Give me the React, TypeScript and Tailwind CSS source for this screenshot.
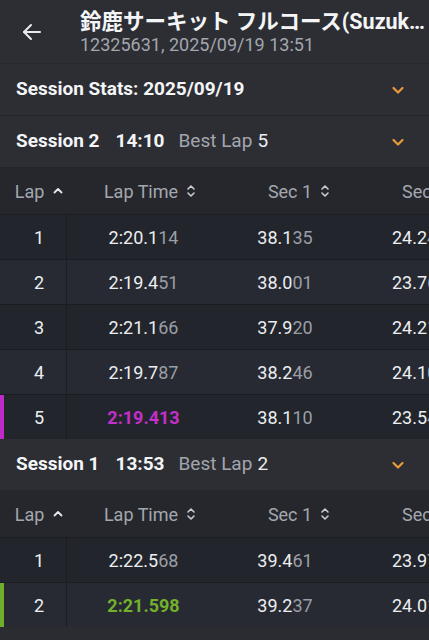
import React from 'react';

interface Lap {
  lap: number;
  time: string;
  sec1: string;
  sec2: string;
  best?: boolean;
}

interface Session {
  name: string;
  start: string;
  bestLap: number;
  color: 'magenta' | 'green';
  laps: Lap[];
}

const sessions: Session[] = [
  {
    name: 'Session 2',
    start: '14:10',
    bestLap: 5,
    color: 'magenta',
    laps: [
      { lap: 1, time: '2:20.114', sec1: '38.135', sec2: '24.248' },
      { lap: 2, time: '2:19.451', sec1: '38.001', sec2: '23.769' },
      { lap: 3, time: '2:21.166', sec1: '37.920', sec2: '24.213' },
      { lap: 4, time: '2:19.787', sec1: '38.246', sec2: '24.102' },
      { lap: 5, time: '2:19.413', sec1: '38.110', sec2: '23.541', best: true },
    ],
  },
  {
    name: 'Session 1',
    start: '13:53',
    bestLap: 2,
    color: 'green',
    laps: [
      { lap: 1, time: '2:22.568', sec1: '39.461', sec2: '23.977' },
      { lap: 2, time: '2:21.598', sec1: '39.237', sec2: '24.015', best: true },
    ],
  },
];

// ── Icons ───────────────────────────────────────────────────────────────────────

function BackArrow() {
  return (
    <svg width="24" height="24" viewBox="0 0 24 24" fill="none" stroke="#e8e9ec" strokeWidth="2" strokeLinecap="round" strokeLinejoin="round">
      <path d="M20 12H4" />
      <path d="M11 5l-7 7 7 7" />
    </svg>
  );
}

function Chevron() {
  return (
    <svg width="16" height="16" viewBox="0 0 16 16" fill="none" stroke="#e99b3c" strokeWidth="2.2" strokeLinecap="round" strokeLinejoin="round">
      <path d="M3.5 6l4.5 4.5L12.5 6" />
    </svg>
  );
}

function SortUp() {
  return (
    <svg width="12" height="12" viewBox="0 0 12 12" fill="none" stroke="#e6e7ea" strokeWidth="1.8" strokeLinecap="round" strokeLinejoin="round">
      <path d="M2.5 7.5L6 4l3.5 3.5" />
    </svg>
  );
}

function SortBoth() {
  return (
    <svg width="10" height="16" viewBox="0 0 10 16" fill="none" stroke="#c9cbd0" strokeWidth="1.6" strokeLinecap="round" strokeLinejoin="round">
      <path d="M2 6l3-3 3 3" />
      <path d="M2 10l3 3 3-3" />
    </svg>
  );
}

// ── Pieces ──────────────────────────────────────────────────────────────────────

function Split({ value, dim }: { value: string; dim: number }) {
  return (
    <span>
      <span className="text-[#eceef1]">{value.slice(0, value.length - dim)}</span>
      <span className="text-[#9a9ea6]">{value.slice(value.length - dim)}</span>
    </span>
  );
}

function SectionBar({ children }: { children: React.ReactNode }) {
  return (
    <div className="flex h-[52px] items-center justify-between border-b border-[#24262b] bg-[#2c2e34] pl-4 pr-[23px]">
      <div className="flex items-baseline text-[19px]">{children}</div>
      <Chevron />
    </div>
  );
}

function TableHead() {
  return (
    <div className="flex h-[46px] items-center bg-[#25272d] text-[18px] text-[#a4a7ae] whitespace-nowrap">
      <div className="flex w-[67px] shrink-0 items-center justify-center gap-2 pl-[12px]">
        Lap <SortUp />
      </div>
      <div className="flex w-[166px] shrink-0 items-center justify-center gap-2">
        Lap Time <SortBoth />
      </div>
      <div className="flex w-[130px] shrink-0 items-center justify-center gap-2 pl-[2px]">
        Sec 1 <SortBoth />
      </div>
      <div className="flex w-[130px] shrink-0 items-center pl-[39px]">
        Sec 2 <SortBoth />
      </div>
    </div>
  );
}

function LapRow({ lap, idx, color }: { lap: Lap; idx: number; color: Session['color'] }) {
  const bg = idx % 2 === 0 ? 'bg-[#22252b]' : 'bg-[#272a32]';
  const bar = color === 'magenta' ? 'bg-[#c02ac6]' : 'bg-[#6fae2a]';
  const best = color === 'magenta' ? 'text-[#c22fc9]' : 'text-[#73b12d]';
  return (
    <div className={`relative flex h-[45px] items-center border-t border-[#1b1d21] text-[18px] whitespace-nowrap ${bg}`}>
      {lap.best && <div className={`absolute left-0 top-0 bottom-0 w-[4px] ${bar}`} />}
      <div className="flex h-full w-[67px] shrink-0 items-center justify-center border-r border-[#1b1d21] pl-[12px] text-[#eceef1]">
        {lap.lap}
      </div>
      <div className="w-[153px] shrink-0 text-center">
        {lap.best ? <span className={`font-bold ${best}`}>{lap.time}</span> : <Split value={lap.time} dim={2} />}
      </div>
      <div className="w-[130px] shrink-0 text-center">
        <Split value={lap.sec1} dim={2} />
      </div>
      <div className="w-[130px] shrink-0 pl-[42px]">
        <Split value={lap.sec2} dim={2} />
      </div>
    </div>
  );
}

// ── App ─────────────────────────────────────────────────────────────────────────

export default function App() {
  return (
    <div className="h-[640px] w-[429px] overflow-hidden bg-[#2a2c32] font-['Roboto','Noto_Sans_CJK_JP',sans-serif]">
      {/* Header */}
      <header className="flex h-[64px] items-center border-b border-[#26282d] bg-[#2c2e34]">
        <div className="flex w-[64px] shrink-0 justify-center">
          <BackArrow />
        </div>
        <div className="min-w-0 flex-1 pl-[16px] pr-[2px]">
          <div className="truncate text-[21.5px] font-bold leading-[25px] text-[#f4f5f7]">
            鈴鹿サーキット フルコース(Suzuka Circuit Full Course)
          </div>
          <div className="text-[18px] leading-[21px] text-[#a3a6ad]">12325631, 2025/09/19 13:51</div>
        </div>
      </header>

      <SectionBar>
        <span className="font-bold text-[#f4f5f7]">Session Stats: 2025/09/19</span>
      </SectionBar>

      {sessions.map((s) => (
        <div key={s.name}>
          <SectionBar>
            <span className="font-bold text-[#f4f5f7]">{s.name}</span>
            <span className="ml-4 font-bold text-[#f4f5f7]">{s.start}</span>
            <span className="ml-[14px] text-[#a3a6ad]">Best Lap</span>
            <span className="ml-[5px] text-[#eceef1]">{s.bestLap}</span>
          </SectionBar>
          <div className="overflow-hidden">
            <TableHead />
            {s.laps.map((l, i) => (
              <LapRow key={l.lap} lap={l} idx={i} color={s.color} />
            ))}
          </div>
        </div>
      ))}
    </div>
  );
}
